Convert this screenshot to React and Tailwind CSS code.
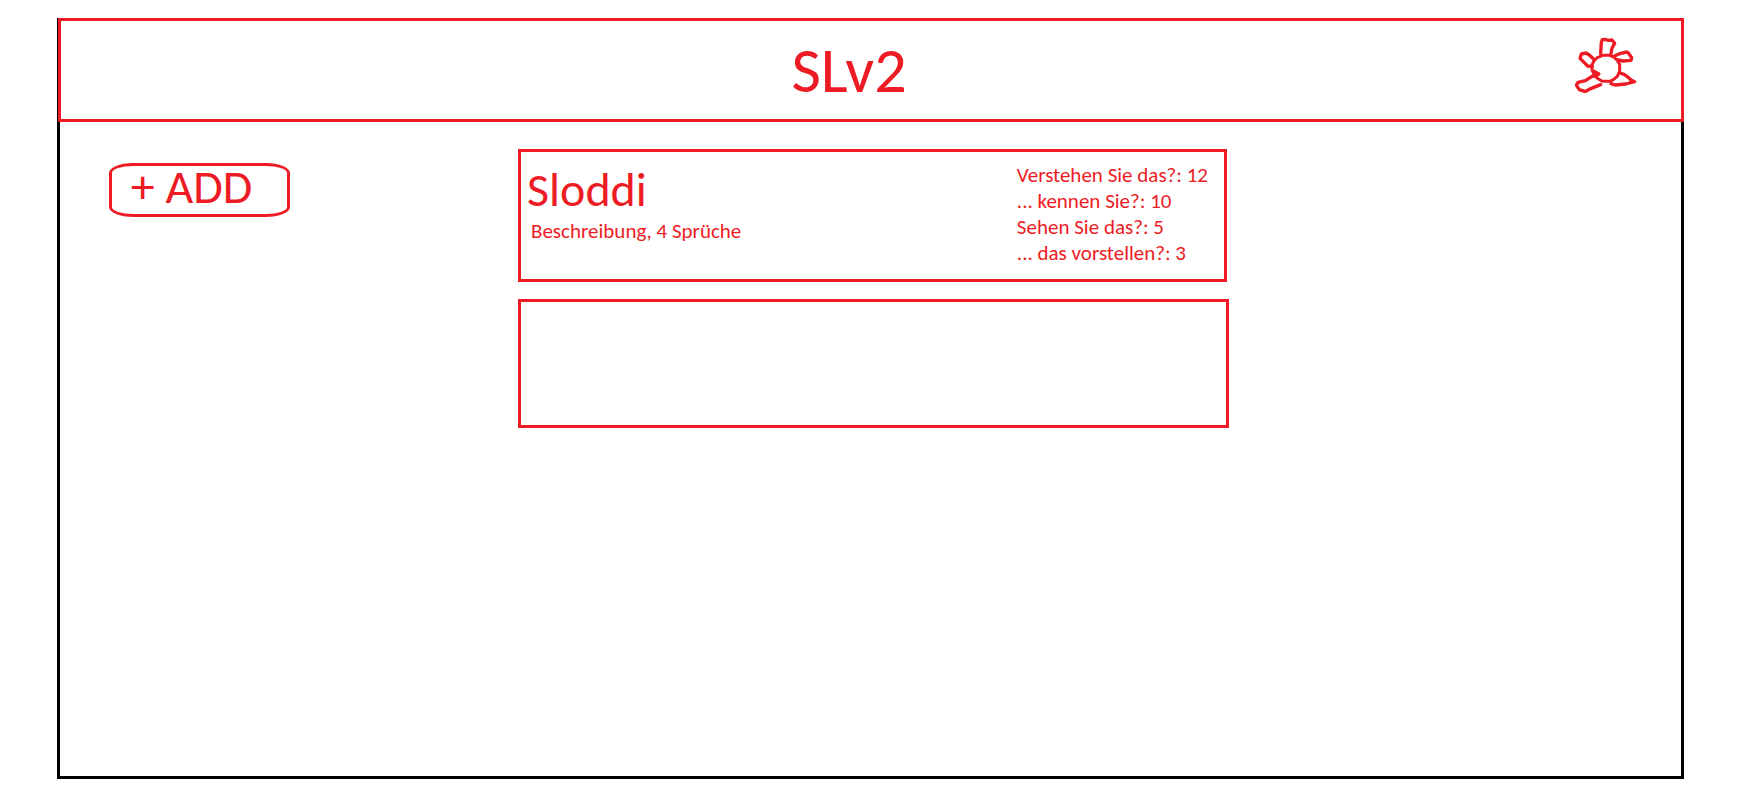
const entries = [
  {
    name: "Sloddi",
    description: "Beschreibung, 4 Sprüche",
    counts: ["Verstehen Sie das?: 12", "... kennen Sie?: 10", "Sehen Sie das?: 5", "... das vorstellen?: 3"],
  },
];

function SunIcon() {
  return (
    <svg
      viewBox="45 36 186 168"
      className="h-[56px] w-[62px]"
      fill="none"
      stroke="currentColor"
      strokeWidth="10"
      strokeLinecap="round"
      strokeLinejoin="round"
      aria-hidden="true"
    >
      <path d="M129 91h20l12 5 10 9 8 13v20l-7 16-12 10-11 5h-22l-13-8-10-11-8-15v-16l7-13 10-9z" strokeWidth="9" />
      <path d="M122 86l2-34 3-8 8-1 11 3 10-1 8 10-8 14-3 17" />
      <path d="M162 94l20-9 19-4 4 3 10 14-2 8-24 2-18-4" />
      <path d="M103 104L88 90l-10-6-14 3-4 13 10 10 13 13 14 1" />
      <path d="M116 147l-13 3-27 17-22 5-5 9 9 13 18 6 11-7 22-9 13-5" />
      <path d="M103 139l13 8-10 8" />
      <path d="M180 144l12 4 13 9 8 8 11 5-27 7-32 3-12-4" />
    </svg>
  );
}

function Header() {
  return (
    <header className="-mr-[3px] -ml-[2px] grid h-[104px] grid-cols-[1fr_auto_1fr] items-center border-[3px] border-[#ed1c24] pr-11">
      <h1 className="col-start-2 text-[64px] leading-[64px]">SLv2</h1>
      <button type="button" aria-label="Einstellungen" className="-mt-[10px] justify-self-end">
        <SunIcon />
      </button>
    </header>
  );
}

function EntryCard({ entry }) {
  return (
    <article className="mr-[2px] flex h-[133px] justify-between border-[3px] border-[#ed1c24] pt-[10px] pr-4 pl-[6px]">
      <div>
        <h2 className="text-[48px] leading-[56px]">{entry.name}</h2>
        <p className="pl-1 text-[21px] leading-[26px]">{entry.description}</p>
      </div>
      <ul className="text-[21px] leading-[26px]">
        {entry.counts.map((count) => (
          <li key={count}>{count}</li>
        ))}
      </ul>
    </article>
  );
}

export default function App() {
  return (
    <div className="flex min-h-screen bg-white pt-[18px] pr-[79px] pb-7 pl-[57px] font-[Carlito,Lato,sans-serif] text-[#ed1c24]">
      <div className="flex flex-1 flex-col border-x-[3px] border-b-[3px] border-black">
        <Header />
        <main className="grid grid-cols-[458fr_711fr_452fr] items-start pt-[27px]">
          <button
            type="button"
            className="mt-[14px] ml-[49px] h-[54px] w-[181px] rounded-[24px/10px] border-[3px] border-[#ed1c24] pr-4 pb-[6px] text-[48px] leading-[42px]"
          >
            + ADD
          </button>
          <section className="flex flex-col gap-[17px]">
            {entries.map((entry) => (
              <EntryCard key={entry.name} entry={entry} />
            ))}
            <article className="h-[129px] border-[3px] border-[#ed1c24]" />
          </section>
        </main>
      </div>
    </div>
  );
}
